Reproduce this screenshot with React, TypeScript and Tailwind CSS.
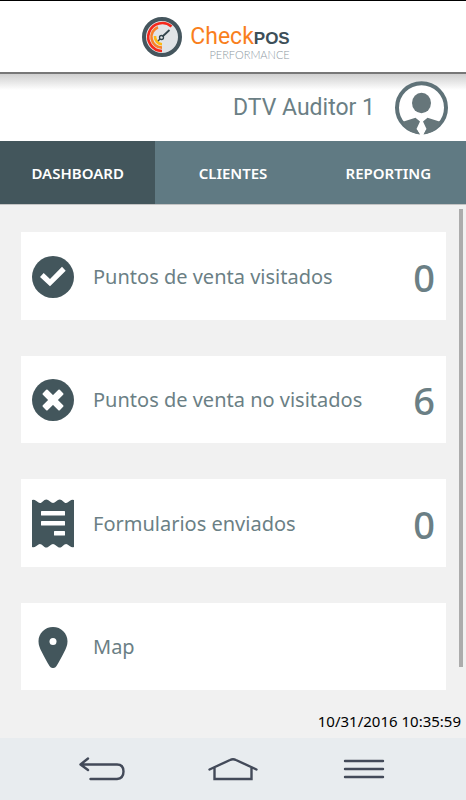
import type { ReactNode } from "react";

const tabs = ["Dashboard", "Clientes", "Reporting"];

const cards: { label: string; icon: ReactNode; count?: number }[] = [
  { label: "Puntos de venta visitados", icon: <CheckIcon />, count: 0 },
  { label: "Puntos de venta no visitados", icon: <CrossIcon />, count: 6 },
  { label: "Formularios enviados", icon: <ReceiptIcon />, count: 0 },
  { label: "Map", icon: <PinIcon /> },
];

function CheckIcon() {
  return (
    <svg width="42" height="42" viewBox="0 0 42 42">
      <circle cx="21" cy="21" r="21" fill="#43565c" />
      <path d="M8 21l3.7-4 6.3 6L30 10.7l3.7 4L18 30.3z" fill="#fff" />
    </svg>
  );
}

function CrossIcon() {
  return (
    <svg width="42" height="42" viewBox="0 0 42 42">
      <circle cx="21" cy="21" r="21" fill="#43565c" />
      <g fill="#fff" transform="rotate(45 21 21)">
        <rect x="9" y="17.6" width="24" height="6.8" rx="1" />
        <rect x="17.6" y="9" width="6.8" height="24" rx="1" />
      </g>
    </svg>
  );
}

function ReceiptIcon() {
  return (
    <svg width="42" height="49" viewBox="0 0 42 49">
      <path
        d="M0 1Q2 0 4 1.8L6.5 3.6Q8 4.5 9.5 3.4L12.5 1Q14.3 0 16 1L19.5 3.6Q21 4.5 22.5 3.6L26 1Q27.7 0 29.5 1L32.5 3.4Q34 4.5 35.5 3.6L38 1.8Q40 0 42 1V48Q40 49 38 47.2L35.5 45.4Q34 44.5 32.5 45.6L29.5 48Q27.7 49 26 48L22.5 45.4Q21 44.5 19.5 45.4L16 48Q14.3 49 12.5 48L9.5 45.6Q8 44.5 6.5 45.4L4 47.2Q2 49 0 48Z"
        fill="#43565c"
      />
      <g fill="#fff">
        <rect x="9" y="12" width="24" height="4.5" rx="0.5" />
        <rect x="9" y="22" width="24" height="4.5" rx="0.5" />
        <rect x="22" y="32" width="11" height="4.5" rx="0.5" />
      </g>
    </svg>
  );
}

function PinIcon() {
  return (
    <svg width="30" height="41" viewBox="0 0 30 41">
      <path
        d="M15 0C6.8 0 .5 6.3.5 14.2c0 4 1.5 7.3 3.3 10.8 2.6 5.2 5 9.6 7.7 14 1.7 2.7 5.3 2.7 7 0 2.7-4.4 5.1-8.8 7.7-14 1.8-3.5 3.3-6.8 3.3-10.8C29.5 6.3 23.2 0 15 0z"
        fill="#43565c"
      />
      <circle cx="15" cy="14.6" r="3.5" fill="#fff" />
    </svg>
  );
}

function GaugeLogo() {
  return (
    <svg width="40" height="40" viewBox="0 0 40 40" fill="none">
      <circle cx="20" cy="20" r="18" fill="#e1e4e7" stroke="#45565e" strokeWidth="4" />
      <path d="M29.5 9.5A14 14 0 1 0 20 34" stroke="#f5281c" strokeWidth="2.6" />
      <path d="M16 10.2A10.6 10.6 0 0 0 20 30.6" stroke="#f9812a" strokeWidth="2.6" />
      <path d="M13 19A7.5 7.5 0 0 0 20 27.2" stroke="#fdb913" strokeWidth="2.6" />
      <path d="M20.5 19.5L27.5 13" stroke="#33454d" strokeWidth="1.8" />
      <circle cx="19.5" cy="20.5" r="2" stroke="#33454d" strokeWidth="1.3" />
      <path d="M18 22l-2 2" stroke="#33454d" strokeWidth="1.5" />
    </svg>
  );
}

function Avatar() {
  return (
    <svg width="54" height="54" viewBox="0 0 54 54">
      <circle cx="26.5" cy="26.7" r="24.5" fill="#fff" stroke="#5f7278" strokeWidth="4" />
      <ellipse cx="26.5" cy="22" rx="9.5" ry="10.2" fill="#66767a" />
      {/* tie gap cuts through the ring at the bottom */}
      <path d="M25 40.5h3l3.5 7.5-3 6h-3.500l-3.500-6z" fill="#fff" />
      <path
        d="M7 41L20.5 36.7 25 40.5 21.5 48 25 53.5C17 52.500 10.500 48 7 41zM46 41L32.500 36.700 28 40.500 31.500 48 28.500 53.500C36 52.500 42.500 48 46 41z"
        fill="#66767a"
      />
    </svg>
  );
}

function Header() {
  return (
    <header className="flex h-[74px] items-center justify-center gap-2 border-t border-b-2 border-t-black border-b-[#777777] bg-white pr-[34px]">
      <GaugeLogo />
      <div className="flex flex-col items-end pt-3">
        <h1 className="flex items-baseline font-['Roboto'] text-[23px] leading-[22px] text-[#f97f1d]">
          Check
          <span className="font-['Liberation_Sans'] text-[17px] font-bold text-[#3d4f58]">
            POS
          </span>
        </h1>
        <p className="font-['Lato'] text-[11px] leading-[10px] font-light text-[#8d989f]">
          PERFORMANCE
        </p>
      </div>
    </header>
  );
}

function NavBar() {
  return (
    <nav className="flex h-[62px] items-center bg-[#e8ecef] px-9 text-[#434a59]">
      <button aria-label="Back" className="flex flex-1 justify-center">
        <svg width="46" height="24" viewBox="0 0 46 24" fill="none" stroke="currentColor" strokeWidth="2.4" strokeLinecap="round" strokeLinejoin="round">
          <path d="M9 1.5L1.5 7.5 9 13M2 7.5H38Q44.5 7.5 44.5 14.5T38 22H11.5" />
        </svg>
      </button>
      <button aria-label="Home" className="flex flex-1 justify-center">
        <svg width="50" height="24" viewBox="0 0 50 24" fill="none" stroke="currentColor" strokeWidth="2.4" strokeLinecap="round">
          <path d="M1.5 12.5L22 3Q25 1.5 28 3L48.5 12.5M6.5 11V22H43.5V11" />
        </svg>
      </button>
      <button aria-label="Menu" className="flex flex-1 justify-center">
        <svg width="42" height="24" viewBox="0 0 42 24" stroke="currentColor" strokeWidth="2.4" strokeLinecap="round">
          <path d="M2 4H40M2 12H40M2 20H40" />
        </svg>
      </button>
    </nav>
  );
}

export default function App() {
  return (
    <div className="flex min-h-screen flex-col bg-[#f1f1f1] font-['Noto_Sans',sans-serif]">
      <Header />
      <div className="flex h-[67px] items-center justify-end gap-5 bg-white bg-linear-to-b from-[#cfcfcf] to-white to-[16px] pr-[17px]">
        <span className="font-['Roboto'] text-[23px] leading-8 text-[#6b7f85]">
          DTV Auditor 1
        </span>
        <Avatar />
      </div>
      <div role="tablist" className="flex h-[63px] bg-[#607a83]">
        {tabs.map((tab, i) => (
          <button
            key={tab}
            role="tab"
            aria-selected={i === 0}
            className="flex-1 pt-0.5 text-[15px] font-semibold text-white uppercase aria-selected:bg-[#43565c]"
          >
            {tab}
          </button>
        ))}
      </div>
      <main className="relative flex flex-1 flex-col border-t border-[#c4c4c4]">
        <div className="grid flex-1 auto-rows-fr gap-9 pt-[27px] pr-5 pl-[21px]">
          {cards.map(({ label, icon, count }) => (
            <a
              key={label}
              href="#"
              className="flex min-h-20 items-center bg-white px-[11px] pt-0.5 text-[#6b7f85]"
            >
              <span className="flex w-[42px] justify-center">{icon}</span>
              <span className="ml-[19px] flex-1 text-[20px] leading-7">{label}</span>
              {count !== undefined && (
                <span className="text-[38px] leading-10 font-medium">{count}</span>
              )}
            </a>
          ))}
        </div>
        <time className="flex h-12 items-end justify-end pr-[5px] pb-[5px] text-[15px] leading-6 text-black">
          10/31/2016 10:35:59
        </time>
        <div className="absolute top-1 right-[3px] bottom-[71px] w-1 bg-[#acacac]"></div>
      </main>
      <NavBar />
    </div>
  );
}
